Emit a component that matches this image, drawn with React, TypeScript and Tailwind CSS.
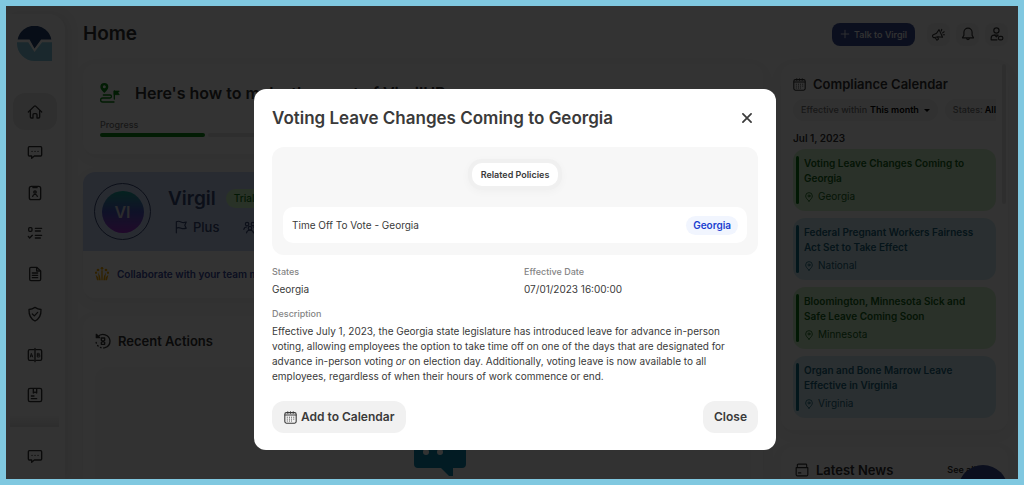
import type { ReactNode } from "react";
import clsx from "clsx";

interface IconProps {
  className?: string;
  children: ReactNode;
}

function Icon({ className = "size-4", children }: IconProps) {
  return (
    <svg
      viewBox="0 0 24 24"
      className={clsx("shrink-0", className)}
      fill="none"
      stroke="currentColor"
      strokeWidth={2}
      strokeLinecap="round"
      strokeLinejoin="round"
      aria-hidden="true"
    >
      {children}
    </svg>
  );
}

const HomeIcon = () => (
  <Icon>
    <path d="M2 12 11 3.2a1.5 1.5 0 0 1 2 0L22 12" />
    <path d="M5 10v9.5a1.5 1.5 0 0 0 1.5 1.5H9v-5a1.5 1.5 0 0 1 1.5-1.5h3A1.5 1.5 0 0 1 15 16v5h2.5a1.5 1.5 0 0 0 1.5-1.5V10" />
  </Icon>
);

const ChatIcon = () => (
  <Icon>
    <path d="M3.500 4h17A1.500 1.500 0 0 1 22 5.500v11a1.500 1.500 0 0 1-1.500 1.500H11l-4 3.500V18H3.500A1.500 1.500 0 0 1 2 16.500v-11A1.500 1.500 0 0 1 3.500 4z" />
    <path d="M7.500 11h.1M12 11h.1M16.500 11h.1" />
  </Icon>
);

const BadgeIcon = () => (
  <Icon>
    <rect x="3.500" y="2" width="17" height="20" rx="3" />
    <path d="M9 2.500v1.500h6V2.500" />
    <circle cx="12" cy="10.500" r="1.800" />
    <path d="M8.500 17c.5-2 1.800-3 3.500-3s3 1 3.500 3" />
  </Icon>
);

const ChecklistIcon = () => (
  <Icon>
    <rect x="2.500" y="4" width="5" height="5.500" rx="1.500" />
    <path d="m2 17 2 2.500 4-4M12.500 5H22M12.500 9H20M12.500 15.500H22M12.500 19.500H20" />
  </Icon>
);

const DocumentIcon = () => (
  <Icon>
    <path d="M6 2h8.500L20.500 7.500V20a2 2 0 0 1-2 2H6a2 2 0 0 1-2-2V4a2 2 0 0 1 2-2z" />
    <path d="M14.500 2.500v5H20M8 10.500h8M8 14h8M8 17.500h8" />
  </Icon>
);

const ShieldIcon = () => (
  <Icon>
    <path d="M12 2c3 2 6 3 9 3.200C21.300 13 19 19 12 22.500 5 19 2.700 13 3 5.200 6 5 9 4 12 2z" />
    <path d="m8 12 3 2.800 5-5.300" />
  </Icon>
);

const CompareIcon = () => (
  <Icon>
    <path d="M10 4H4a2 2 0 0 0-2 2v12a2 2 0 0 0 2 2h6M14 4h6a2 2 0 0 1 2 2v12a2 2 0 0 1-2 2h-6M12 2v20" />
    <path
      d="m5 15 1.500-5.500L8.500 15M5.500 13.500H8M16 9.500h1.500a1.200 1.200 0 0 1 0 2.500H16zM16 12h2a1.300 1.300 0 0 1 0 3h-2z"
      strokeWidth={1.4}
    />
  </Icon>
);

const LogbookIcon = () => (
  <Icon>
    <rect x="2" y="2" width="20" height="20" rx="2.500" />
    <path d="M9.500 2.500V9L12 7.500 14.500 9V2.500M6.500 13.500h4M6.500 17.500h8" />
  </Icon>
);

const CalendarIcon = () => (
  <Icon className="size-[13px]">
    <rect x="1.500" y="3" width="21" height="19.500" rx="3" />
    <path d="M2 7.500h20M7 1.500V4M12 1.500V4M17 1.500V4" />
    <path
      d="M6 11.500h.1M10 11.500h.1M14 11.500h.1M18 11.500h.1M6 15h.1M10 15h.1M14 15h.1M18 15h.1M6 18.500h.1M10 18.500h.1M14 18.500h.1"
      strokeWidth={1.8}
    />
  </Icon>
);

const PinIcon = () => (
  <Icon className="size-[10px]">
    <path d="M12 22c-5-5-8-8.500-8-12.500a8 8 0 0 1 16 0c0 4-3 7.500-8 12.500z" />
    <circle cx="12" cy="9.500" r="2.500" />
  </Icon>
);

const FlagIcon = () => (
  <Icon className="size-[14px]">
    <path d="M4 22V3c3-1.500 5.500-1 8 .3S17 5 21 3.500L18.500 9l2.500 5c-4 1.500-6.500 1-9 0s-5-1.500-8 0" />
  </Icon>
);

const TeamIcon = () => (
  <Icon className="size-[14px]">
    <circle cx="7" cy="7" r="3" />
    <circle cx="17" cy="7" r="3" />
    <circle cx="12" cy="14" r="3" />
    <path d="M1.500 16c.5-2.500 2-4 4.500-4M22.500 16c-.5-2.500-2-4-4.500-4M6 22c.5-3 3-4.500 6-4.500s5.500 1.500 6 4.500" />
  </Icon>
);

const RouteIcon = () => (
  <svg
    viewBox="0 0 60 60"
    className="size-5 shrink-0"
    fill="none"
    stroke="currentColor"
    strokeWidth={4}
    strokeLinecap="round"
    strokeLinejoin="round"
    aria-hidden="true"
  >
    <path
      fill="currentColor"
      stroke="none"
      fillRule="evenodd"
      d="M13 0a12 12 0 0 1 12 12c0 7-6 11-12 18C7 23 1 19 1 12A12 12 0 0 1 13 0zm0 7a4.500 4.500 0 1 0 0 9 4.500 4.500 0 0 0 0-9z"
    />
    <path d="M10 36h20a4.500 4.500 0 0 1 0 9H8a5.500 5.500 0 0 0 0 12h34M43 24v24" />
    <path d="M43 24h15l-4 5 4 6H43z" fill="currentColor" strokeWidth={2} />
  </svg>
);

const CrownIcon = () => (
  <svg viewBox="0 0 42 42" className="size-[14px] shrink-0" fill="currentColor" aria-hidden="true">
    <circle cx="21" cy="4" r="4" />
    <circle cx="9" cy="9" r="4" />
    <circle cx="33" cy="9" r="4" />
    <circle cx="3" cy="17" r="3.500" />
    <circle cx="39" cy="17" r="3.500" />
    <path d="M19 10h4v30h-4zM9 16l6 11 2 13h-5zM33 16l-6 11-2 13h5zM2 23l7 7 2 10H6zM40 23l-7 7-2 10h5z" />
  </svg>
);

const HistoryIcon = () => (
  <Icon>
    <path d="M4 6a10.500 10.500 0 0 1 18.500 6A10.500 10.500 0 0 1 15 22" />
    <path d="M14 22.300A10.500 10.500 0 0 1 1.500 12" strokeDasharray="1 4" />
    <path d="M2 2v5h5z" fill="currentColor" />
    <path d="M9.500 7.500h5v3.500l-2.500 1.500L9.500 11zM9.500 17h5v-3L12 12.500 9.500 14z" />
  </Icon>
);

const MegaphoneIcon = () => (
  <Icon className="size-[13px]">
    <path d="m2.500 12.500 6-3L13 3l6.500 14-8.500-1-6 1.500a2.800 2.800 0 0 1-2.500-5zM6 18l3 4.500 3-2-1.500-3M17 5.500l1-3M19.500 9l3-2M20.500 12.500h2.500" />
  </Icon>
);

const BellIcon = () => (
  <Icon className="size-[14px]">
    <path d="M12 2a7 7 0 0 0-7 7v5l-2.500 4.500h19L19 14V9a7 7 0 0 0-7-7zM9.500 19a2.500 2.500 0 0 0 5 0" />
  </Icon>
);

const ProfileIcon = () => (
  <Icon className="size-[14px]">
    <circle cx="11" cy="6" r="4.500" />
    <path d="M12 22H2v-3c0-3 2-5 5-5h6" />
    <path d="M8 14l3 3 3-3" />
    <rect x="14.500" y="16" width="7.500" height="6" rx="2.500" />
  </Icon>
);

const NewsIcon = () => (
  <Icon className="size-[14px]">
    <path d="M4 6V3.500A1.500 1.500 0 0 1 5.500 2h13A1.500 1.500 0 0 1 20 3.500V6" />
    <path d="M2 8h20v12a2 2 0 0 1-2 2H4a2 2 0 0 1-2-2zM6 17h4" />
  </Icon>
);

const Logo = () => (
  <svg viewBox="0 0 106 106" className="mx-auto size-[35px]" aria-hidden="true">
    <path fill="#234272" d="M2 41a52 52 0 0 1 102 0H73L53 68 38 41z" />
    <path fill="#80c8e0" d="M0 49h34l19 30 23-30h30v57H53A53 53 0 0 1 0 53z" />
  </svg>
);

const navItems = [
  { label: "Home", icon: <HomeIcon />, active: true },
  { label: "Messages", icon: <ChatIcon /> },
  { label: "Employees", icon: <BadgeIcon /> },
  { label: "Tasks", icon: <ChecklistIcon /> },
  { label: "Documents", icon: <DocumentIcon /> },
  { label: "Policies", icon: <ShieldIcon /> },
  { label: "Compare", icon: <CompareIcon /> },
  { label: "Logbook", icon: <LogbookIcon /> },
];

const events = [
  { title: "Voting Leave Changes Coming to Georgia", place: "Georgia", green: true },
  { title: "Federal Pregnant Workers Fairness Act Set to Take Effect", place: "National", green: false },
  { title: "Bloomington, Minnesota Sick and Safe Leave Coming Soon", place: "Minnesota", green: true },
  { title: "Organ and Bone Marrow Leave Effective in Virginia", place: "Virginia", green: false },
];

function Sidebar() {
  return (
    <aside className="mt-2 flex w-[59px] shrink-0 flex-col rounded-tr-2xl bg-white pt-3 pr-0.5 shadow-[4px_0_12px_rgba(0,0,0,0.08)]">
      <Logo />
      <nav className="mt-8 flex flex-1 flex-col justify-between">
        {navItems.map((item) => (
          <a
            key={item.label}
            href="#"
            aria-label={item.label}
            className={clsx(
              "mx-auto flex h-[37px] w-11 items-center justify-center rounded-xl",
              item.active && "bg-[#ebebeb]"
            )}
          >
            {item.icon}
          </a>
        ))}
      </nav>
      <div className="mx-1 h-[13px] bg-linear-to-b from-white to-[#e4e4e4]" />
      <a href="#" aria-label="Support" className="flex h-[52px] items-center justify-center pt-1.5">
        <ChatIcon />
      </a>
    </aside>
  );
}

function MainColumn() {
  return (
    <main className="flex min-w-0 flex-1 flex-col gap-[18px]">
      <section className="rounded-xl bg-white px-[17px] pt-[19px] pb-[17px] shadow-[0_4px_14px_rgba(0,0,0,0.05)]">
        <div className="flex items-center gap-[15px]">
          <span className="text-[#0a8a14]">
            <RouteIcon />
          </span>
          <h2 className="text-base leading-5 font-semibold whitespace-nowrap">
            Here's how to make the most of VirgilHR
          </h2>
        </div>
        <p className="mt-4 text-[9px] leading-3 font-medium text-[#777]">Progress</p>
        <div className="mt-0.5 flex gap-[3px]">
          {[0, 1, 2, 3, 4, 5].map((step) => (
            <span
              key={step}
              className={clsx("h-1 flex-1 rounded-full", step === 0 ? "bg-[#0a8a14]" : "bg-[#e4e4e4]")}
            />
          ))}
        </div>
      </section>

      <section className="rounded-xl bg-white shadow-[0_4px_14px_rgba(0,0,0,0.05)]">
        <div className="flex items-center gap-[17px] rounded-t-xl bg-[#c8d6f6] px-[11px] py-[11px] text-[#3a4a78]">
          <div className="flex size-[57px] items-center justify-center rounded-full border border-[#3a4a78]">
            <div className="flex size-[42px] items-center justify-center rounded-full bg-linear-to-b from-[#13a89a] via-[#4b56c4] to-[#a02bd0] text-base font-semibold text-[#d8d8e0]">
              VI
            </div>
          </div>
          <div>
            <div className="flex items-center gap-[10px]">
              <span className="text-[19px] leading-6 font-semibold">Virgil</span>
              <span className="rounded-full bg-[#cdf7c0] px-2 text-[10px] leading-[19px] font-medium text-[#117a1a]">
                Trial
              </span>
            </div>
            <div className="mt-1.5 flex items-center gap-6 pl-1.5 text-[13px] leading-5 font-medium">
              <span className="flex items-center gap-[5px]">
                <FlagIcon />
                Plus
              </span>
              <span className="flex items-center gap-[5px]">
                <TeamIcon />
              </span>
            </div>
          </div>
        </div>
        <p className="flex items-center gap-2 px-3 pt-[15px] pb-4 text-[10px] leading-4 font-semibold whitespace-nowrap text-[#3a4aa0]">
          <span className="text-[#f5a800]">
            <CrownIcon />
          </span>
          Collaborate with your team members
        </p>
      </section>

      <section className="flex-1 rounded-t-xl bg-white px-3 pt-[15px] shadow-[0_4px_14px_rgba(0,0,0,0.05)]">
        <h2 className="flex items-center gap-[7px] text-[13px] leading-5 font-semibold">
          <HistoryIcon />
          Recent Actions
        </h2>
        <div className="mt-4 flex h-full justify-center rounded-t-xl bg-[#fafafa] pt-[72px] pl-[34px]">
          <svg viewBox="0 0 52 38" className="h-[38px] w-[52px]" aria-hidden="true">
            <path
              fill="#0b86b0"
              d="M4 0h44a4 4 0 0 1 4 4v21a4 4 0 0 1-4 4h-9v8h-4l-8-8H4a4 4 0 0 1-4-4V4a4 4 0 0 1 4-4z"
            />
            <circle cx="12" cy="13" r="3" fill="#fff" />
            <circle cx="26" cy="13" r="3" fill="#fff" />
          </svg>
        </div>
      </section>
    </main>
  );
}

function CalendarColumn() {
  return (
    <aside className="flex w-[227px] shrink-0 flex-col gap-[17px]">
      <section className="relative rounded-xl bg-white px-3 pt-[11px] pb-3 shadow-[0_4px_14px_rgba(0,0,0,0.05)]">
        <span className="absolute top-0 right-0.5 h-[140px] w-1 rounded-full bg-[#e4e4e4]" />
        <h2 className="flex items-center gap-[7px] text-[13px] leading-[18px] font-semibold">
          <CalendarIcon />
          Compliance Calendar
        </h2>
        <div className="mt-1.5 flex justify-between text-[9px] leading-[22px] font-medium whitespace-nowrap text-[#777]">
          <button type="button" className="flex shrink-0 items-center gap-[3px] rounded-xl bg-[#f2f2f2] px-2">
            Effective within <strong className="font-semibold text-black">This month</strong>
            <span className="ml-0.5 border-x-[3px] border-t-[3px] border-x-transparent border-t-black" />
          </button>
          <button type="button" className="flex shrink-0 items-center gap-0.5 rounded-l-xl bg-[#f2f2f2] pl-2">
            States: <strong className="font-semibold text-black">All</strong>
          </button>
        </div>
        <h3 className="mt-[9px] text-[10px] leading-4 font-semibold">Jul 1, 2023</h3>
        <ul className="mt-[3px] flex flex-col gap-[7px]">
          {events.map((event) => (
            <li
              key={event.title}
              className={clsx(
                "flex gap-[5px] rounded-xl py-[7px] pr-5 pl-[3px]",
                event.green ? "bg-[#d3f2cd] text-[#166a1b]" : "bg-[#d2ecf2] text-[#1c6780]"
              )}
            >
              <span className={clsx("w-[3px] shrink-0 rounded-sm", event.green ? "bg-[#0a7a14]" : "bg-[#0f7189]")} />
              <div>
                <h4 className="text-[10px] leading-[15px] font-semibold">{event.title}</h4>
                <p className="mt-[3px] flex items-center gap-1 text-[10px] leading-[15px]">
                  <PinIcon />
                  {event.place}
                </p>
              </div>
            </li>
          ))}
        </ul>
      </section>
      <section className="flex-1 rounded-t-xl bg-white px-[14px] pt-[13px] shadow-[0_4px_14px_rgba(0,0,0,0.05)]">
        <div className="flex items-center">
          <h2 className="flex items-center gap-[7px] text-[13px] leading-5 font-semibold">
            <NewsIcon />
            Latest News
          </h2>
          <a href="#" className="ml-auto pr-[18px] text-[9px] font-semibold">
            See all
          </a>
        </div>
      </section>
    </aside>
  );
}

function EventDialog() {
  return (
    <div
      role="dialog"
      aria-modal="true"
      aria-labelledby="event-title"
      className="w-full max-w-[522px] rounded-xl bg-white px-[18px] pt-4 pb-[17px] text-[#3a3a3a]"
    >
      <header className="flex items-center justify-between">
        <h1 id="event-title" className="text-[17px] leading-[26px] font-semibold">
          Voting Leave Changes Coming to Georgia
        </h1>
        <button type="button" aria-label="Close dialog" className="mr-1">
          <Icon className="size-[14px]">
            <path d="M5 5l14 14M19 5 5 19" strokeWidth={3} />
          </Icon>
        </button>
      </header>

      <section className="mt-4 flex flex-col items-center rounded-xl bg-[#f7f7f7] px-[11px] pt-4 pb-3">
        <button
          type="button"
          className="rounded-[10px] bg-white px-[9px] text-[9px] leading-[23px] font-semibold shadow-[0_0_0_4px_#f0f0f0,0_2px_8px_4px_rgba(0,0,0,0.03)]"
        >
          Related Policies
        </button>
        <div className="mt-[21px] flex h-9 w-full items-center justify-between rounded-[10px] bg-white px-[9px]">
          <span className="text-[10px]">Time Off To Vote - Georgia</span>
          <span className="rounded-full bg-[#f1f5fe] px-[7px] text-[10px] leading-[19px] font-semibold text-[#1a3fd0]">
            Georgia
          </span>
        </div>
      </section>

      <dl className="mt-[11px] grid grid-cols-2 gap-x-[18px] gap-y-[11px] text-[10px] leading-[15px]">
        <div>
          <dt className="text-[9px] leading-3 font-medium text-[#858585]">States</dt>
          <dd className="mt-1">Georgia</dd>
        </div>
        <div>
          <dt className="text-[9px] leading-3 font-medium text-[#858585]">Effective Date</dt>
          <dd className="mt-1">07/01/2023 16:00:00</dd>
        </div>
        <div className="col-span-2">
          <dt className="text-[9px] leading-3 font-medium text-[#858585]">Description</dt>
          <dd className="mt-1 pr-5">
            Effective July 1, 2023, the Georgia state legislature has introduced leave for advance in-person voting,
            allowing employees the option to take time off on one of the days that are designated for advance in-person
            voting <em>or</em> on election day. Additionally, voting leave is now available to all employees, regardless
            of when their hours of work commence or end.
          </dd>
        </div>
      </dl>

      <footer className="mt-[17px] flex justify-between text-xs leading-8 font-semibold">
        <button type="button" className="flex items-center gap-1 rounded-xl bg-[#f1f1f1] px-3">
          <CalendarIcon />
          Add to Calendar
        </button>
        <button type="button" className="rounded-xl bg-[#f1f1f1] px-[11px]">
          Close
        </button>
      </footer>
    </div>
  );
}

export default function App() {
  return (
    <div className="h-screen bg-[#80c8e0] p-1.5 font-[Inter,sans-serif] text-[#333]">
      <div className="relative flex h-full overflow-hidden bg-[#fcfcfc]">
        <Sidebar />
        <div className="flex min-w-0 flex-1 flex-col pr-[10px] pl-[18px]">
          <header className="mb-0.5 flex h-14 shrink-0 items-center justify-between">
            <h1 className="text-[19px] font-semibold">Home</h1>
            <div className="flex items-center gap-1.5">
              <button
                type="button"
                className="mr-1.5 flex items-center gap-1 rounded-lg bg-[#3a4d94] px-2 text-[9px] leading-[23px] font-medium text-white"
              >
                <Icon className="size-[10px]">
                  <path d="M12 3v18M3 12h18" />
                </Icon>
                Talk to Virgil
              </button>
              <button
                type="button"
                aria-label="Announcements"
                className="flex size-[23px] items-center justify-center rounded-lg bg-[#f5f5f5]"
              >
                <MegaphoneIcon />
              </button>
              <button
                type="button"
                aria-label="Notifications"
                className="flex size-[23px] items-center justify-center rounded-lg bg-[#f5f5f5]"
              >
                <BellIcon />
              </button>
              <button
                type="button"
                aria-label="Profile"
                className="flex size-[23px] items-center justify-center rounded-lg bg-[#f5f5f5]"
              >
                <ProfileIcon />
              </button>
            </div>
          </header>
          <div className="flex min-h-0 flex-1 gap-[18px]">
            <MainColumn />
            <CalendarColumn />
          </div>
        </div>
        <button
          type="button"
          aria-label="Open chat"
          className="absolute right-[10px] -bottom-9 size-[50px] rounded-full bg-[#3a4d94]"
        />
        <div className="absolute inset-0 flex items-start justify-center bg-black/80 pt-[83px] pl-1.5">
          <EventDialog />
        </div>
      </div>
    </div>
  );
}
